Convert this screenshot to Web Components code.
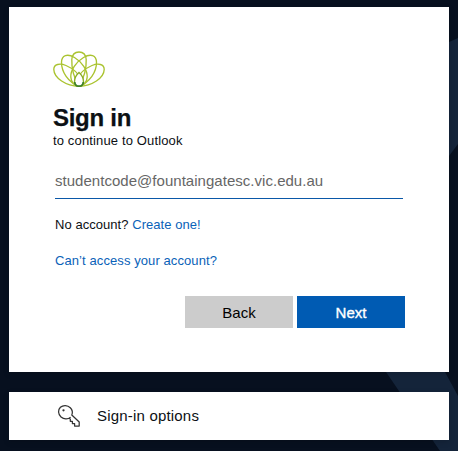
<!DOCTYPE html>
<html lang="en">
<head>
<meta charset="utf-8">
<title>Sign in</title>
<style>
html,body{margin:0;height:100%;overflow:hidden;background:#07101f}
</style>
</head>
<body>
<signin-page></signin-page>
<script>
const define = (name, html) => {
  const t = document.createElement('template');
  t.innerHTML = html;
  customElements.define(name, class extends HTMLElement {
    constructor(){ super(); this.attachShadow({mode:'open'}).append(t.content.cloneNode(true)); }
  });
};

define('lotus-logo', `
<style>:host{display:block;width:54px;height:38px}svg{display:block}</style>
<svg width="54" height="38" viewBox="52 50 54 38" fill="none" stroke="#aac32f" stroke-width="1.35">
  <path d="M79 86.300C66 86 54 78 53.800 69.500C53.700 64 60 63 66 65.500C73 68.500 79 74 81.500 80"/>
  <path d="M79 86.300C92 86 104 78 104.200 69.500C104.300 64 98 63 92 65.500C85 68.500 79 74 76.500 80"/>
  <path d="M79 86.300C68 82 61.500 72 61.500 62.500C61.500 55 67.500 53.300 74.500 57.500C82 62 87.500 70 87.200 77C87 82 83.500 86.300 79 86.300"/>
  <path d="M79 86.300C90 82 96.500 72 96.500 62.500C96.500 55 90.500 53.300 83.500 57.500C76 62 70.500 70 70.800 77C71 82 74.500 86.300 79 86.300"/>
  <path d="M79 86.300C73.500 77 71.500 67 71.800 59.500C72.200 54.500 75 52 79 52C83 52 85.800 54.500 86.200 59.500C86.500 67 84.500 77 79 86.300"/>
  <path d="M79 72.500C75.600 75.500 74.500 79 74.500 81.700C74.500 84.700 76.200 86.300 79 86.300C81.800 86.300 83.500 84.700 83.500 81.700C83.500 79 82.400 75.500 79 72.500Z" stroke="#8bad27" fill="#fff"/>
  <path d="M74.700 82C75 85.200 76.600 86.200 79 86.200C81.400 86.200 83 85.200 83.300 82" stroke="#3c802a" stroke-width="1.7"/>
</svg>`);

define('key-icon', `
<style>:host{display:block;width:24px;height:24px}svg{display:block}</style>
<svg width="24" height="24" viewBox="57 404 24 24" fill="none" stroke="#333" stroke-width="1.25" stroke-linejoin="round">
  <path d="M70.600 417.300C68 419.600 63.900 419.500 61 417C58 414.300 57.700 409.800 60.400 407.300C63.200 404.700 67.600 405 70.300 407.800C72.300 409.900 72.800 412.700 71.800 415L79.200 422V426H74.600V423.600H72.400V421.300H70.300V419.100L69.300 418.200"/>
  <circle cx="63.500" cy="410.300" r="1.150" fill="#333" stroke="none"/>
</svg>`);

define('text-link', `<style>:host{color:#0a62b8}</style><slot></slot>`);

define('flat-button', `
<style>:host{display:flex;align-items:center;justify-content:center;box-sizing:border-box;width:108px;height:32px;padding-top:1px;background:#ccc;color:#000;font-size:15px;line-height:18px}
:host([primary]){background:#005bb3;color:#fff;-webkit-text-stroke:.35px #fff}</style><span><slot></slot></span>`);

define('signin-card', `
<style>
:host{display:block;box-sizing:border-box;width:440px;height:365px;padding:43px 44px 0 43px;background:#fff;color:#0c1014;font-size:13px;line-height:16px}
h1{margin:14px 0 0 1px;font-size:24px;line-height:32px;letter-spacing:-.28px;-webkit-text-stroke:.25px}
.sub{margin:-1px 0 0 1px;letter-spacing:.14px}
.field{margin:14px 0 0 3px;width:348px;height:36px;box-sizing:border-box;border-bottom:1px solid #0a58a8;font-size:15px;line-height:36px;letter-spacing:.03px;color:#666}
p{margin:18px 0 0 3px;letter-spacing:.05px}
p+p{margin-top:20px;letter-spacing:.09px}
.actions{display:flex;justify-content:flex-end;gap:4px;margin-top:27px}
</style>
<lotus-logo></lotus-logo>
<h1>Sign in</h1>
<div class="sub">to continue to Outlook</div>
<div class="field">studentcode@fountaingatesc.vic.edu.au</div>
<p>No account? <text-link>Create one!</text-link></p>
<p><text-link>Can’t access your account?</text-link></p>
<div class="actions"><flat-button>Back</flat-button><flat-button primary>Next</flat-button></div>`);

define('options-card', `
<style>:host{display:flex;align-items:center;gap:16px;box-sizing:border-box;width:440px;height:48px;padding-left:48px;background:#fff;color:#0c1014;font-size:15px;letter-spacing:.19px}
span{margin-top:-1px}</style>
<key-icon></key-icon><span><slot></slot></span>`);

define('page-backdrop', `
<style>:host{display:block;position:absolute;inset:0;z-index:-1}svg{display:block}</style>
<svg width="458" height="451"><rect width="458" height="451" fill="#07101f"/>
<path d="M440 46L458 38V144L440 168ZM374 351L386 372L440 451H458V396L445 372L434 351Z" fill="#14243a"/></svg>`);

define('signin-page', `
<style>:host{display:flex;flex-direction:column;gap:20px;position:relative;z-index:0;box-sizing:border-box;width:458px;height:451px;padding:7px 9px;font-family:"Liberation Sans",Arial,sans-serif}
signin-card,options-card{box-shadow:0 2px 6px rgba(0,0,0,.15)}</style>
<page-backdrop></page-backdrop>
<signin-card></signin-card>
<options-card>Sign-in options</options-card>`);
</script>
</body>
</html>
